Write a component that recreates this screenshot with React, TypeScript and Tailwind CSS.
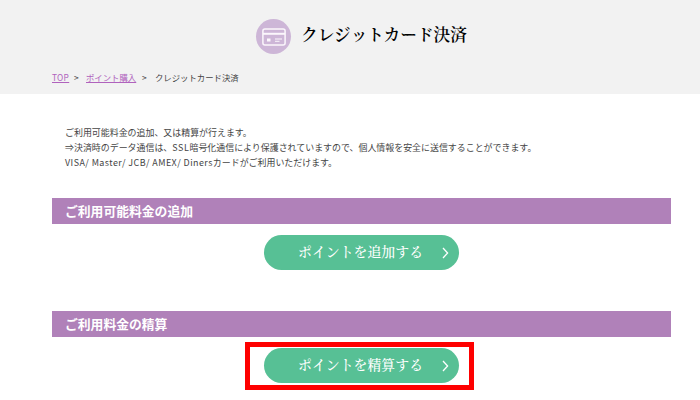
import React from "react";

function CardIcon() {
  return (
    <span className="flex size-[35px] shrink-0 items-center justify-center rounded-full bg-[#cdb6d7]">
      <svg width="24" height="18" viewBox="0 0 24 18" fill="none" stroke="#fbf7fc" strokeWidth="1.5">
        <rect x="0.9" y="0.9" width="22.2" height="16" rx="2" />
        <path d="M1 5.8h22" strokeWidth="2" />
        <path d="M13 11h7M13 13.3h4.5" strokeWidth="1" />
        <rect x="5" y="10.5" width="3.5" height="3" fill="#fbf7fc" stroke="none" />
      </svg>
    </span>
  );
}

function SectionBar({ title }: { title: string }) {
  return (
    <h2 className="h-[26px] w-[619px] bg-[#b081b9] pl-[13px] text-[12.8px] leading-[26px] font-bold whitespace-nowrap text-white">
      {title}
    </h2>
  );
}

function PillButton({ label }: { label: string }) {
  return (
    <button className="flex h-[35px] w-[195px] items-center justify-between rounded-full bg-[#57c095] pr-[10px] pl-[34px] text-left font-['Noto_Serif_CJK_JP','Noto_Sans_CJK_JP',serif] text-[13.9px] leading-[32px] font-medium whitespace-nowrap text-white">
      <span className="-mt-[3px]">{label}</span>
      <svg width="7" height="12" viewBox="0 0 7 12" fill="none" stroke="white" strokeWidth="1.3">
        <path d="M1 1l4.6 5L1 11" />
      </svg>
    </button>
  );
}

export default function App() {
  return (
    <main className="h-[400px] w-[700px] overflow-hidden bg-white font-['Noto_Sans_CJK_JP',sans-serif] text-[#444]">
      <header className="h-[94px] bg-[#f2f2f2] pt-[19px]">
        <div className="flex h-[35px] items-center gap-[10px] pl-[256px]">
          <CardIcon />
          <h1 className="-mt-[5px] font-['Noto_Serif_CJK_JP','Noto_Sans_CJK_JP',serif] text-[16.7px] leading-[26px] font-semibold whitespace-nowrap text-black">
            クレジットカード決済
          </h1>
        </div>
        <nav className="mt-[16px] flex pl-[52px] text-[8.4px] leading-[14px] whitespace-nowrap">
          <a className="w-[22px] text-[#b062bd]"><span className="tracking-[0.3px] underline underline-offset-1">TOP</span></a>
          <span className="w-[12px]">&gt;</span>
          <a className="w-[56px] text-[#b062bd]"><span className="underline underline-offset-1">ポイント購入</span></a>
          <span className="w-[13px]">&gt;</span>
          <span>クレジットカード決済</span>
        </nav>
      </header>
      <div className="h-[104px] pt-[31px] pl-[65px] text-[8.95px] leading-[15px] whitespace-nowrap">
        <p>ご利用可能料金の追加、又は精算が行えます。</p>
        <p>⇒決済時のデータ通信は、<span className="tracking-[0.6px]">SSL</span>暗号化通信により保護されていますので、個人情報を安全に送信することができます。</p>
        <p><span className="tracking-[0.44px]">VISA/ Master/ JCB/ AMEX/ Diners</span>カードがご利用いただけます。</p>
      </div>
      <section className="h-[113px] pl-[52px]">
        <SectionBar title="ご利用可能料金の追加" />
        <div className="pt-[11px] pl-[212px]">
          <PillButton label="ポイントを追加する" />
        </div>
      </section>
      <section className="pl-[52px]">
        <SectionBar title="ご利用料金の精算" />
        <div className="mt-[5px] ml-[193px] h-[48px] w-[229px] border-5 border-[#fe0000] pt-[1px] pl-[14px]">
          <PillButton label="ポイントを精算する" />
        </div>
      </section>
    </main>
  );
}
